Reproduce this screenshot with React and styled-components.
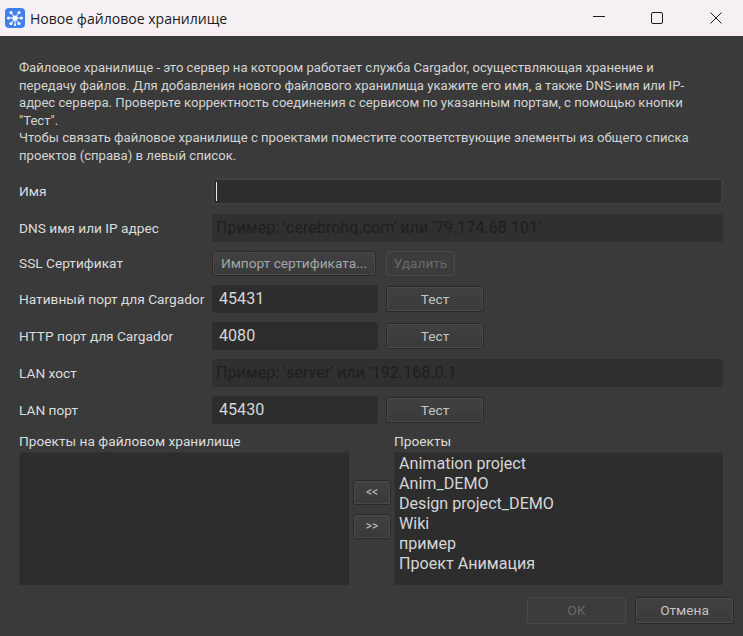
import React from 'react';
import styled, { createGlobalStyle, css } from 'styled-components';

const GlobalStyle = createGlobalStyle`
    html, body {
        margin: 0;
        padding: 0;
        height: 100%;
        overflow: hidden;
        background: #3a3a3a;
    }
    * {
        box-sizing: border-box;
    }
`;

const Window = styled.div`
    width: 743px;
    height: 636px;
    display: flex;
    flex-direction: column;
    background: #3a3a3a;
    color: #d6d6d6;
    font-family: Roboto, "Liberation Sans", sans-serif;
    font-size: 13.7px;
`;

const TitleBar = styled.div`
    height: 36px;
    flex: none;
    display: flex;
    align-items: center;
    padding-left: 5px;
    background: #f6f0f4;
    color: #1b1b1b;
`;

const TitleText = styled.span`
    margin-left: 5px;
    font-family: "Open Sans", "Noto Sans", sans-serif;
    font-size: 14.05px;
`;

const WindowControls = styled.div`
    margin-left: auto;
    margin-right: -1px;
    display: flex;
    align-items: center;
`;

const ControlButton = styled.div`
    width: 58px;
    height: 36px;
    display: flex;
    align-items: center;
    justify-content: center;

    &:last-child {
        padding-left: 2px;
    }
`;

const Body = styled.div`
    flex: 1;
    display: flex;
    flex-direction: column;
    padding: 23px 9px 12px 19px;
`;

const Intro = styled.p`
    margin: 0 0 13.4px;
    width: 715px;
    line-height: 17.6px;
    font-size: 13.12px;
    white-space: pre-line;
    color: #d4d4d4;
`;

const Row = styled.div`
    display: flex;
    align-items: center;
    height: ${(p) => p.$height || 28}px;
    margin-bottom: 9px;
`;

const Label = styled.div`
    width: 193px;
    flex: none;
    color: #dcdcdc;
`;

const fieldBase = css`
    height: 100%;
    display: block;
    border: 0;
    outline: 0;
    border-radius: 3px;
    background: #2d2d2d;
    font-family: Roboto, "Liberation Sans", sans-serif;
    font-size: 16.1px;
    color: #d6d6d6;
    padding: 0 7px;
`;

const Field = styled.input`
    ${fieldBase}
    width: ${(p) => p.$width || 511}px;
    background: ${(p) => (p.disabled ? '#303030' : '#2d2d2d')};
    padding-left: ${(p) => (p.disabled ? 4 : 7)}px;

    &::placeholder {
        color: #1e1e1e;
        opacity: 1;
    }
`;

const NameField = styled.div`
    ${fieldBase}
    width: 511px;
    display: flex;
    align-items: center;
    padding: 0 2px;
    border: 2px solid #404040;
`;

const Caret = styled.span`
    width: 1px;
    height: 19px;
    background: #e8e8e8;
`;

const Button = styled.button`
    height: ${(p) => p.$height || 26}px;
    width: ${(p) => p.$width}px;
    flex: none;
    margin-left: ${(p) => p.$gap || 0}px;
    padding: 0;
    border: 1px solid ${(p) => (p.disabled ? '#4a4a4a' : '#2a2a2a')};
    border-radius: 3px;
    outline: 1px solid ${(p) => (p.disabled ? 'transparent' : '#4a4a4a')};
    outline-offset: -2px;
    background: ${(p) => (p.disabled ? '#3c3c3c' : 'linear-gradient(#414141, #3a3a3a)')};
    color: ${(p) => (p.disabled ? '#6a6a6a' : p.$dim ? '#a4a6a8' : '#c4c4c4')};
    font-family: Roboto, "Liberation Sans", sans-serif;
    font-size: ${(p) => p.$size || 13.7}px;
`;

const ListsHeader = styled.div`
    display: grid;
    grid-template-columns: 375px 1fr;
    color: #dcdcdc;
    line-height: 17px;
    height: 19px;
`;

const Lists = styled.div`
    display: grid;
    grid-template-columns: 330px 45px 329px;
    height: 133px;
`;

const ListBox = styled.div`
    background: #2d2d2d;
    border-top: 1px solid #343434;
    border-left: 1px solid #343434;
    padding: 1px 4px;
    font-size: 16.1px;
    line-height: 20px;
    color: #d6d6d6;
`;

const MoveButtons = styled.div`
    display: flex;
    flex-direction: column;
    gap: 9px;
    padding: 28px 0 0 4px;
`;

const Footer = styled.div`
    display: flex;
    justify-content: flex-end;
    gap: 9px;
    margin-top: 12px;
    width: 715px;
`;

const projects = ['Animation project', 'Anim_DEMO', 'Design project_DEMO', 'Wiki', 'пример', 'Проект Анимация'];

const AppIcon = () => (
    <svg width="20" height="20" viewBox="0 0 20 20">
        <rect width="20" height="20" rx="4" fill="#3f7fee" />
        <g stroke="#fff" strokeWidth="1">
            <path d="M10 10 6 4.5M10 10l4-5.5M10 10H3.5M10 10h6.5M10 10l-4 5.5M10 10l4 5.5M10 10v6.5" />
        </g>
        <g fill="#fff">
            <circle cx="10" cy="10" r="2.6" />
            <circle cx="6" cy="4.5" r="1.6" />
            <circle cx="14" cy="4.5" r="1.6" />
            <circle cx="3.5" cy="10" r="1.6" />
            <circle cx="16.5" cy="10" r="1.6" />
            <circle cx="6" cy="15.5" r="1.6" />
            <circle cx="14" cy="15.5" r="1.6" />
            <circle cx="10" cy="17" r="1.1" />
        </g>
    </svg>
);

const App = () => {
    return (
        <Window>
            <GlobalStyle />
            <TitleBar>
                <AppIcon />
                <TitleText>Новое файловое хранилище</TitleText>
                <WindowControls>
                    <ControlButton>
                        <svg width="12" height="12" viewBox="0 0 12 12">
                            <path d="M0 4.5h12" stroke="#1b1b1b" />
                        </svg>
                    </ControlButton>
                    <ControlButton>
                        <svg width="12" height="12" viewBox="0 0 12 12">
                            <rect x=".5" y=".5" width="11" height="11" rx="1.5" fill="none" stroke="#1b1b1b" />
                        </svg>
                    </ControlButton>
                    <ControlButton>
                        <svg width="12" height="12" viewBox="0 0 12 12">
                            <path d="M.5.5l11 11M11.5.5l-11 11" stroke="#1b1b1b" />
                        </svg>
                    </ControlButton>
                </WindowControls>
            </TitleBar>
            <Body>
                <Intro>
                    {`Файловое хранилище - это сервер на котором работает служба Cargador, осуществляющая хранение и
передачу файлов. Для добавления нового файлового хранилища укажите его имя, а также DNS-имя или IP-
адрес сервера.  Проверьте корректность соединения с сервисом по указанным портам, с помощью кнопки
"Тест".
Чтобы связать файловое хранилище с проектами поместите соответствующие элементы из общего списка
проектов (справа) в левый список.`}
                </Intro>
                <Row $height={27}>
                    <Label>Имя</Label>
                    <NameField><Caret /></NameField>
                </Row>
                <Row>
                    <Label>DNS имя или IP адрес</Label>
                    <Field disabled placeholder="Пример: 'cerebrohq.com' или '79.174.68.101'" />
                </Row>
                <Row $height={25}>
                    <Label>SSL Сертификат</Label>
                    <Button $dim $width={164} $height={25}>Импорт сертификата...</Button>
                    <Button disabled $width={69} $height={25} $gap={10}>Удалить</Button>
                </Row>
                <Row>
                    <Label>Нативный порт для Cargador</Label>
                    <Field $width={166} readOnly value="45431" />
                    <Button $width={98} $gap={8}>Тест</Button>
                </Row>
                <Row>
                    <Label>HTTP порт для Cargador</Label>
                    <Field $width={166} readOnly value="4080" />
                    <Button $width={98} $gap={8}>Тест</Button>
                </Row>
                <Row>
                    <Label>LAN хост</Label>
                    <Field disabled placeholder="Пример: 'server' или '192.168.0.1'" />
                </Row>
                <Row>
                    <Label>LAN порт</Label>
                    <Field $width={166} readOnly value="45430" />
                    <Button $width={98} $gap={8}>Тест</Button>
                </Row>
                <ListsHeader>
                    <span>Проекты на файловом хранилище</span>
                    <span>Проекты</span>
                </ListsHeader>
                <Lists>
                    <ListBox />
                    <MoveButtons>
                        <Button $width={38} $height={25} $size={12}>{'<<'}</Button>
                        <Button $width={38} $height={25} $size={12}>{'>>'}</Button>
                    </MoveButtons>
                    <ListBox>
                        {projects.map((name) => <div key={name}>{name}</div>)}
                    </ListBox>
                </Lists>
                <Footer>
                    <Button disabled $width={99} $height={27}>OK</Button>
                    <Button $width={99} $height={27}>Отмена</Button>
                </Footer>
            </Body>
        </Window>
    );
};

export default App;
